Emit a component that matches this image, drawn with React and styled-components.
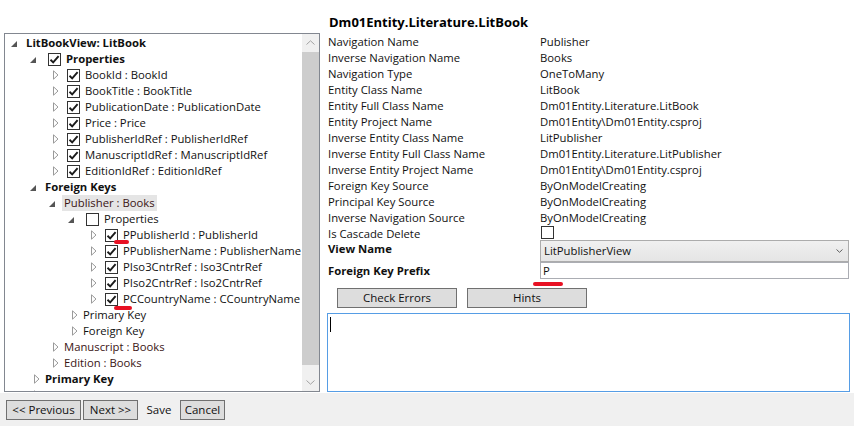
import React from 'react';
import styled, { createGlobalStyle } from 'styled-components';

const Global = createGlobalStyle`
  html, body { margin: 0; padding: 0; background: #fff; }
  body {
    font-family: "Open Sans", "Noto Sans", sans-serif;
    font-size: 11.3px;
    color: #000;
  }
  #root { width: 854px; height: 426px; overflow: hidden; }
  * { box-sizing: border-box; }
`;

const Window = styled.div`
  width: 854px;
  height: 426px;
  display: flex;
  flex-direction: column;
  background: #fff;
`;

const Main = styled.div`
  height: 393px;
  display: flex;
  align-items: flex-start;
`;

/* ---------- Left tree panel ---------- */
const TreePanel = styled.div`
  margin: 33px 0 0 4px;
  width: 316px;
  height: 359px;
  border: 1px solid #828790;
  display: flex;
  background: #fff;
`;

const TreeArea = styled.div`
  flex: 1;
  overflow: hidden;
  padding-top: 1px;
`;

const Row = styled.div`
  position: relative;
  height: 16px;
  display: flex;
  align-items: center;
  padding-left: ${p => p.$level * 19}px;
  white-space: nowrap;
`;

const Expander = styled.div`
  width: 19px;
  height: 16px;
  flex: none;
  display: flex;
  align-items: center;
  padding-left: ${p => (p.$open ? 6 : 10)}px;
  padding-top: ${p => (p.$open ? 1 : 0)}px;
`;

const NodeText = styled.span`
  position: relative;
  margin-left: ${p => (p.$afterBox ? 3 : 0)}px;
  padding: 0 2px;
  line-height: 16px;
  height: 16px;
  font-weight: ${p => (p.$bold ? 700 : 400)};
  color: ${p => (p.$nav ? '#3a1414' : '#111')};
  background: ${p => (p.$selected ? '#e5e5e5' : 'transparent')};
`;

const BoxFrame = styled.span`
  width: 13px;
  height: 13px;
  flex: none;
  border: 1px solid #333;
  background: #fff;
  display: flex;
  align-items: center;
  justify-content: center;
  margin-left: ${p => p.$ml ?? 5}px;
`;

const RedMark = styled.span`
  position: absolute;
  height: 4px;
  border-radius: 2px;
  background: #e81123;
  left: ${p => p.$left}px;
  top: ${p => p.$top}px;
  width: ${p => p.$width}px;
`;

const CheckBox = ({ checked, ml }) => (
  <BoxFrame $ml={ml}>
    {checked && (
      <svg width="11" height="11" viewBox="0 0 11 11">
        <path d="M1.5 5.8 L4.2 8.4 L9.6 2.2" fill="none" stroke="#1a1a1a" strokeWidth="1.9" />
      </svg>
    )}
  </BoxFrame>
);

const ExpandIcon = ({ open }) =>
  open ? (
    <svg width="6" height="6" viewBox="0 0 6 6">
      <path d="M6 0 L6 6 L0 6 Z" fill="#555" />
    </svg>
  ) : (
    <svg width="6" height="10" viewBox="0 0 6 10">
      <path d="M0.5 0.8 L5 5 L0.5 9.2 Z" fill="none" stroke="#9a9a9a" strokeWidth="1" />
    </svg>
  );

/* scrollbar drawing */
const ScrollBar = styled.div`
  width: 17px;
  flex: none;
  background: #f0f0f0;
  display: flex;
  flex-direction: column;
`;
const ScrollBtn = styled.div`
  height: 17px;
  display: flex;
  align-items: center;
  justify-content: center;
  flex: none;
`;
const Thumb = styled.div`
  margin-top: 1px;
  height: 313px;
  background: #cdcdcd;
`;
const Track = styled.div`
  flex: 1;
`;

const Chevron = ({ up }) => (
  <svg width="9" height="5" viewBox="0 0 9 5">
    <path d={up ? 'M0.5 4.5 L4.5 0.8 L8.5 4.5' : 'M0.5 0.5 L4.5 4.2 L8.5 0.5'} fill="none" stroke="#a3a3a3" strokeWidth="1" />
  </svg>
);

const treeData = [
  { l: 0, e: 'o', t: 'LitBookView: LitBook', b: true },
  { l: 1, e: 'o', cb: true, t: 'Properties', b: true },
  { l: 2, e: 'c', cb: true, t: 'BookId : BookId' },
  { l: 2, e: 'c', cb: true, t: 'BookTitle : BookTitle' },
  { l: 2, e: 'c', cb: true, t: 'PublicationDate : PublicationDate' },
  { l: 2, e: 'c', cb: true, t: 'Price : Price' },
  { l: 2, e: 'c', cb: true, t: 'PublisherIdRef : PublisherIdRef' },
  { l: 2, e: 'c', cb: true, t: 'ManuscriptIdRef : ManuscriptIdRef' },
  { l: 2, e: 'c', cb: true, t: 'EditionIdRef : EditionIdRef' },
  { l: 1, e: 'o', t: 'Foreign Keys', b: true },
  { l: 2, e: 'o', t: 'Publisher : Books', nav: true, sel: true },
  { l: 3, e: 'o', cb: false, t: 'Properties' },
  { l: 4, e: 'c', cb: true, t: 'PPublisherId : PublisherId', mark: { left: -7, top: 13, width: 15 } },
  { l: 4, e: 'c', cb: true, t: 'PPublisherName : PublisherName' },
  { l: 4, e: 'c', cb: true, t: 'PIso3CntrRef : Iso3CntrRef' },
  { l: 4, e: 'c', cb: true, t: 'PIso2CntrRef : Iso2CntrRef' },
  { l: 4, e: 'c', cb: true, t: 'PCCountryName : CCountryName', mark: { left: -7, top: 15, width: 18 } },
  { l: 3, e: 'c', t: 'Primary Key' },
  { l: 3, e: 'c', t: 'Foreign Key' },
  { l: 2, e: 'c', t: 'Manuscript : Books', nav: true },
  { l: 2, e: 'c', t: 'Edition : Books', nav: true },
  { l: 1, e: 'c', t: 'Primary Key', b: true },
  { l: 1, e: 'c', t: 'Navigations', b: true },
];

const Tree = () => (
  <TreePanel>
    <TreeArea>
      {treeData.map((n, i) => (
        <Row key={i} $level={n.l}>
          <Expander $open={n.e === 'o'}>
            <ExpandIcon open={n.e === 'o'} />
          </Expander>
          {n.cb !== undefined && <CheckBox checked={n.cb} />}
          <NodeText $bold={n.b} $nav={n.nav} $selected={n.sel} $afterBox={n.cb !== undefined}>
            {n.t}
            {n.mark && <RedMark $left={n.mark.left} $top={n.mark.top} $width={n.mark.width} />}
          </NodeText>
        </Row>
      ))}
    </TreeArea>
    <ScrollBar>
      <ScrollBtn><Chevron up /></ScrollBtn>
      <Thumb />
      <Track />
      <ScrollBtn><Chevron /></ScrollBtn>
    </ScrollBar>
  </TreePanel>
);

/* ---------- Right panel ---------- */
const RightPanel = styled.div`
  width: 523px;
  margin-left: 7px;
  display: flex;
  flex-direction: column;
`;

const Title = styled.div`
  padding: 12px 0 0 2px;
  height: 34px;
  line-height: 20px;
  font-size: 13px;
  font-weight: 700;
  color: #000;
`;

const PropGrid = styled.div`
  display: grid;
  grid-template-columns: 213px 1fr;
`;

const Label = styled.div`
  height: ${p => p.$h || 16}px;
  line-height: 16px;
  padding-left: 1px;
  padding-top: ${p => p.$pt || 0}px;
  font-weight: ${p => (p.$bold ? 700 : 400)};
  white-space: nowrap;
  color: #111;
`;

const Value = styled.div`
  position: relative;
  height: ${p => p.$h || 16}px;
  line-height: 16px;
  white-space: nowrap;
  color: #111;
  display: flex;
  align-items: flex-start;
`;

const SelectBox = styled.div`
  width: 309px;
  height: 22px;
  border: 1px solid #acacac;
  background: linear-gradient(#f0f0f0, #e5e5e5);
  display: flex;
  align-items: center;
  justify-content: space-between;
  padding: 0 5px 0 3px;
  line-height: 18px;
`;

const TextBox = styled.div`
  width: 309px;
  height: 17px;
  border: 1px solid #abadb3;
  background: #fff;
  padding-left: 2px;
  line-height: 15px;
`;

const ButtonRow = styled.div`
  display: flex;
  gap: 10px;
  margin-top: 9px;
  padding-left: 10px;
`;

const Button = styled.div`
  width: ${p => p.$w}px;
  height: 20px;
  background: ${p => (p.$flat ? 'transparent' : '#dddddd')};
  border: 1px solid ${p => (p.$flat ? 'transparent' : '#707070')};
  display: flex;
  align-items: center;
  justify-content: center;
  line-height: 16px;
  font-size: 11.5px;
  color: #111;
`;

const Output = styled.div`
  margin-top: 5px;
  height: 79px;
  border: 1px solid #569de5;
  background: #fff;
  padding: 3px 0 0 2px;
`;

const Caret = styled.div`
  width: 1px;
  height: 15px;
  background: #000;
`;

const props = [
  ['Navigation Name', 'Publisher'],
  ['Inverse Navigation Name', 'Books'],
  ['Navigation Type', 'OneToMany'],
  ['Entity Class Name', 'LitBook'],
  ['Entity Full Class Name', 'Dm01Entity.Literature.LitBook'],
  ['Entity Project Name', 'Dm01Entity\\Dm01Entity.csproj'],
  ['Inverse Entity Class Name', 'LitPublisher'],
  ['Inverse Entity Full Class Name', 'Dm01Entity.Literature.LitPublisher'],
  ['Inverse Entity Project Name', 'Dm01Entity\\Dm01Entity.csproj'],
  ['Foreign Key Source', 'ByOnModelCreating'],
  ['Principal Key Source', 'ByOnModelCreating'],
  ['Inverse Navigation Source', 'ByOnModelCreating'],
];

const Details = () => (
  <RightPanel>
    <Title>Dm01Entity.Literature.LitBook</Title>
    <PropGrid>
      {props.map(([k, v]) => (
        <React.Fragment key={k}>
          <Label>{k}</Label>
          <Value>{v}</Value>
        </React.Fragment>
      ))}
      <Label $h={14}>Is Cascade Delete</Label>
      <Value $h={14}>
        <CheckBox checked={false} ml={1} />
      </Value>
      <Label $h={22} $pt={1} $bold>View Name</Label>
      <Value $h={22}>
        <SelectBox>
          <span>LitPublisherView</span>
          <svg width="7" height="4" viewBox="0 0 7 4">
            <path d="M0.5 0.5 L3.5 3.3 L6.5 0.5" fill="none" stroke="#606060" strokeWidth="1" />
          </svg>
        </SelectBox>
      </Value>
      <Label $h={17} $pt={1} $bold>Foreign Key Prefix</Label>
      <Value $h={17}>
        <TextBox>P</TextBox>
        <RedMark $left={-7} $top={20} $width={30} />
      </Value>
    </PropGrid>
    <ButtonRow>
      <Button $w={120}>Check Errors</Button>
      <Button $w={120}>Hints</Button>
    </ButtonRow>
    <Output>
      <Caret />
    </Output>
  </RightPanel>
);

/* ---------- Footer ---------- */
const Footer = styled.div`
  height: 33px;
  background: #f0f0f0;
  display: flex;
  align-items: flex-start;
  gap: 2px;
  padding: 7px 0 0 6px;
`;

export default function App() {
  return (
    <Window>
      <Global />
      <Main>
        <Tree />
        <Details />
      </Main>
      <Footer>
        <Button $w={75}>&lt;&lt; Previous</Button>
        <Button $w={55}>Next &gt;&gt;</Button>
        <Button $w={38} $flat>Save</Button>
        <Button $w={45}>Cancel</Button>
      </Footer>
    </Window>
  );
}
